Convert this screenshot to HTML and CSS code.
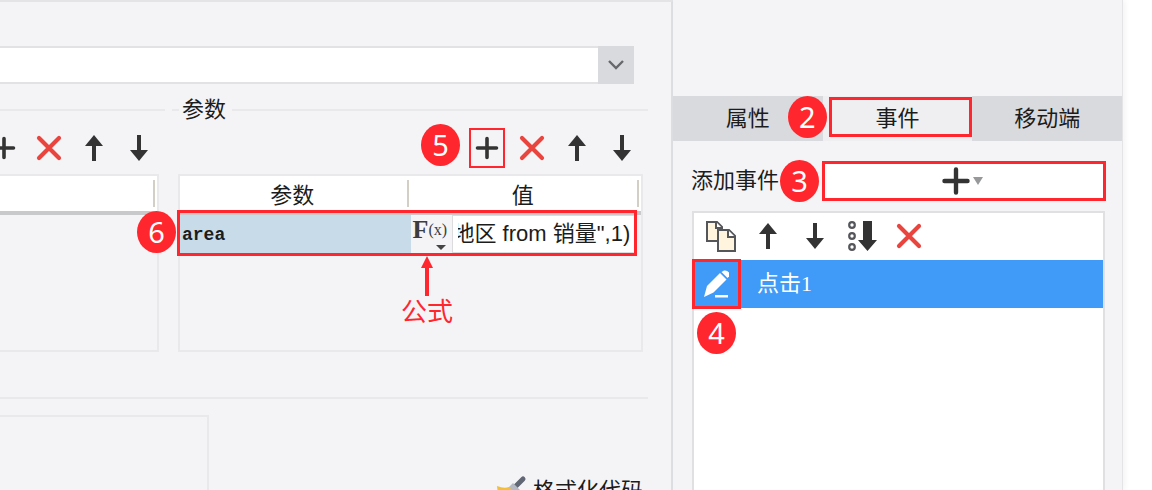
FILE: index.html
```html
<!DOCTYPE html>
<html lang="zh-CN">
<head>
<meta charset="utf-8">
<title>添加事件</title>
<link rel="stylesheet" href="styles.css">
</head>
<body>
<svg class="sprite" aria-hidden="true">
  <symbol id="plus" viewBox="0 0 28 28"><path d="M14 4.500v19M4.500 14h19" stroke="#333" stroke-width="3.600" stroke-linecap="round"/></symbol>
  <symbol id="cross" viewBox="0 0 28 28"><path d="M4 4l20 20M24 4l-20 20" stroke="#ea443e" stroke-width="4.200" stroke-linecap="round"/></symbol>
  <symbol id="up" viewBox="0 0 28 28"><path d="M14 1l9 11h-18z" fill="#333"/><path d="M14 9v18" stroke="#333" stroke-width="4"/></symbol>
  <symbol id="down" viewBox="0 0 28 28"><path d="M14 27l9-11h-18z" fill="#333"/><path d="M14 1v18" stroke="#333" stroke-width="4"/></symbol>
</svg>
<div class="page">
  <main class="editor">
    <div class="combo">
      <input class="combo-text" type="text" aria-label="名称">
      <button class="combo-open" type="button" aria-label="展开"><svg width="18" height="12" viewBox="0 0 18 12"><path d="M2 2l7 7 7-7" fill="none" stroke="#66686c" stroke-width="2.400"/></svg></button>
    </div>

    <div class="groups">
      <section class="group group-left">
        <div class="group-title"><span class="rule"></span></div>
        <div class="tools">
          <button class="tool" type="button" aria-label="添加"><svg class="icon"><use href="#plus"/></svg></button>
          <button class="tool" type="button" aria-label="删除"><svg class="icon"><use href="#cross"/></svg></button>
          <button class="tool" type="button" aria-label="上移"><svg class="icon"><use href="#up"/></svg></button>
          <button class="tool" type="button" aria-label="下移"><svg class="icon"><use href="#down"/></svg></button>
        </div>
        <div class="grid-box"><div class="blank-head"></div></div>
      </section>

      <section class="group group-right">
        <div class="group-title"><span class="rule rule-short"></span><h2 class="legend">参数</h2><span class="rule"></span></div>
        <div class="tools">
          <button class="tool tool-marked" type="button" aria-label="添加参数"><svg class="icon"><use href="#plus"/></svg><span class="badge badge-5">5</span></button>
          <button class="tool" type="button" aria-label="删除参数"><svg class="icon"><use href="#cross"/></svg></button>
          <button class="tool" type="button" aria-label="上移参数"><svg class="icon"><use href="#up"/></svg></button>
          <button class="tool" type="button" aria-label="下移参数"><svg class="icon"><use href="#down"/></svg></button>
        </div>
        <div class="grid-box">
          <table class="params">
            <thead><tr><th>参数</th><th>值</th></tr></thead>
            <tbody><tr>
              <td class="name">area</td>
              <td><div class="value">
                <button class="fx" type="button" aria-label="公式"><b>F</b><span>(x)</span><i class="fx-caret"></i></button>
                <input class="value-text" type="text" aria-label="值" value='地区 from 销量",1)'>
              </div></td>
            </tr></tbody>
          </table>
          <div class="row-mark"></div>
          <span class="badge badge-6">6</span>
          <div class="note">
            <svg width="12" height="40" viewBox="0 0 12 40"><path d="M6 0l6 12H0z" fill="#ff272d"/><path d="M6 10v30" stroke="#ff272d" stroke-width="4"/></svg>
            <span>公式</span>
          </div>
        </div>
      </section>
    </div>

    <hr class="divider">
    <div class="code-row">
      <div class="code-box"></div>
      <button class="format" type="button">
        <svg width="32" height="32" viewBox="0 0 32 32"><path d="M20 11l7-7" stroke="#626775" stroke-width="5" stroke-linecap="round"/><path d="M17 8l7 7-4 4-8-6z" fill="#b4b8c2"/><path d="M1 11q7 3 12 1l8 8q-3 8-11 10Q2 24 1 11z" fill="#f5bf35"/></svg>
        <span>格式化代码</span>
      </button>
    </div>
  </main>

  <aside class="panel">
    <nav class="tabs">
      <button class="tab" type="button">属性</button>
      <button class="tab tab-active" type="button">事件<span class="tab-mark"></span><span class="badge badge-2">2</span></button>
      <button class="tab" type="button">移动端</button>
    </nav>
    <div class="add-row">
      <label class="add-label" for="add">添加事件</label>
      <button class="add" id="add" type="button"><svg class="add-icon"><use href="#plus"/></svg><i class="add-caret"></i><span class="badge badge-3">3</span></button>
    </div>
    <div class="events">
      <div class="event-tools">
        <button class="tool" type="button" aria-label="复制"><svg width="32" height="32" viewBox="0 0 32 32" fill="#fff5df" stroke="#55565a" stroke-width="2"><path d="M2 2h10l5 5v14H2z"/><path d="M11 2v6h6" fill="#fff"/><path d="M13 10h11l6 6v15H13z"/><path d="M23 10v7h7" fill="#fff"/></svg></button>
        <button class="tool" type="button" aria-label="上移事件"><svg class="icon"><use href="#up"/></svg></button>
        <button class="tool" type="button" aria-label="下移事件"><svg class="icon"><use href="#down"/></svg></button>
        <button class="tool" type="button" aria-label="排序"><svg width="32" height="32" viewBox="0 0 32 32"><g fill="#fff" stroke="#55565a" stroke-width="2.200"><circle cx="6" cy="5" r="2.800"/><circle cx="6" cy="16" r="2.800"/><circle cx="6" cy="27" r="2.800"/></g><path d="M17 1h9v19h5L21.500 31 12 20h5z" fill="#333"/></svg></button>
        <button class="tool" type="button" aria-label="删除事件"><svg class="icon"><use href="#cross"/></svg></button>
      </div>
      <div class="event">
        <button class="edit" type="button" aria-label="编辑"><svg width="28" height="28" viewBox="0 0 28 28" fill="#fff"><path d="M1 27l3-11L17 3l6.500 6.500L10.500 22.500z"/><path d="M18.500 2L21 .500q3-.500 5 2v4L24.500 8z"/><path d="M12 25h13v2.500H12z"/></svg></button>
        <span class="event-name">点击1</span>
        <span class="badge badge-4">4</span>
      </div>
    </div>
  </aside>
</div>
</body>
</html>
```
FILE: styles.css
```css
* { box-sizing: border-box; }

body {
  margin: 0;
  background: #fff;
  color: #1c1c1c;
  font: 22px/24px "Liberation Sans", "Noto Sans CJK SC", sans-serif;
}

button, input { font: inherit; color: inherit; margin: 0; padding: 0; border: 0; }
button { background: none; }
.sprite { position: absolute; width: 0; height: 0; }

.page { display: flex; height: 100vh; padding-right: 29px; overflow: hidden; }

.editor {
  display: flex;
  flex: 1;
  flex-direction: column;
  min-width: 0;
  padding-top: 44px;
  background: #f4f4f7;
  border-top: 2px solid #e4e4e6;
  border-right: 2px solid #dedfe2;
}

.combo { display: flex; height: 38px; margin-right: 37px; flex: none; }
.combo-text {
  flex: 1;
  min-width: 0;
  background: #fff;
  border-top: 2px solid #e2e2e4;
  border-bottom: 2px solid #e2e2e4;
}
.combo-open { display: grid; place-items: center; width: 36px; background: #d9dade; }

.groups { display: flex; gap: 7px; margin: 14px 23px 0 0; flex: none; }
.group-left { flex: 1; min-width: 0; }
.group-right { width: 476px; }
.group-title { display: flex; align-items: center; height: 24px; }
.rule { flex: 1; height: 2px; background: #e9e9ec; }
.rule-short { flex: none; width: 7px; }
.legend { margin: 0 6px 0 3px; font-size: 22px; font-weight: 400; }

.tools {
  display: flex;
  justify-content: flex-end;
  align-items: center;
  gap: 9px;
  height: 52px;
  padding-right: 8px;
}
.tool {
  position: relative;
  display: grid;
  place-items: center;
  flex: none;
  width: 36px;
  height: 40px;
}
.tool-marked { border: 2px solid #ff272d; }
.icon { width: 28px; height: 28px; }

.grid-box { position: relative; height: 178px; margin: 0 5px 0 6px; border: 2px solid #e9e9ec; }
.group-left .grid-box { margin: 0 6px 0 0; border-left: 0; }
.blank-head {
  height: 39px;
  border-bottom: 4px solid #c8c9ca;
  background: linear-gradient(#d3cfc5, #d3cfc5) right 2px center / 2px 27px no-repeat #fff;
}

.params { width: 100%; table-layout: fixed; border-collapse: separate; border-spacing: 0; }
.params th {
  height: 39px;
  padding: 4px 6px 0 0;
  font-weight: 400;
  border-bottom: 4px solid #c8c9ca;
  background: linear-gradient(#d3cfc5, #d3cfc5) right 2px center / 2px 27px no-repeat #fff;
}
.params td { height: 38px; padding: 0; }
.params .name {
  padding: 2px 0 0 2px;
  background: #c8dbe8;
  font: bold 18px/24px "Liberation Mono", monospace;
}
.value { display: flex; height: 38px; padding-right: 4px; }
.fx {
  position: relative;
  display: flex;
  width: 41px;
  padding: 1px 0 0 2px;
  color: #3c3c3c;
  font: 16px/28px "Liberation Serif", serif;
}
.fx b { font-size: 26px; font-weight: 700; }
.fx-caret {
  position: absolute;
  right: 6px;
  bottom: 3px;
  border: 5px solid transparent;
  border-top-color: #444;
  border-bottom: 0;
}
.value-text {
  flex: 1;
  min-width: 0;
  padding-left: 5px;
  text-indent: -5px;
  background: #fff;
  border: 1px solid #dcdcdf;
}

.row-mark { position: absolute; left: -3px; right: 4px; top: 34px; height: 46px; border: 3px solid #ff272d; }
.note {
  position: absolute;
  left: 221px;
  top: 80px;
  display: flex;
  flex-direction: column;
  align-items: center;
  color: #ff272d;
  font-size: 26px;
  line-height: 32px;
}

.badge {
  position: absolute;
  width: 39px;
  height: 42px;
  border-radius: 50%;
  background: #ff272d;
  color: #fff;
  font: 29px/42px "Noto Sans", sans-serif;
  text-align: center;
}
.badge-2 { left: -35px; top: 0; }
.badge-3 { left: -45px; top: -4px; }
.badge-4 { left: 3px; top: 52px; }
.badge-5 { left: -50px; top: -6px; }
.badge-6 { left: -43px; top: 35px; }

.divider { flex: none; width: auto; height: 2px; margin: 45px 23px 0 0; border: 0; background: #e9e9ec; }
.code-row { display: flex; flex: 1; justify-content: space-between; min-height: 0; padding: 16px 28px 0 0; }
.code-box { width: 209px; border: solid #e9e9ec; border-width: 2px 2px 0 0; }
.format { display: flex; align-items: center; gap: 5px; align-self: flex-start; margin-top: 60px; }

.panel {
  display: flex;
  flex-direction: column;
  width: 450px;
  padding-top: 96px;
  background: #f4f4f7;
  border-right: 1px solid #e4e4e7;
  box-shadow: 2px 0 6px #0000000d;
}
.tabs { display: flex; height: 45px; flex: none; }
.tab { position: relative; flex: 1; background: #d9dade; }
.tab-active { background: #efeff1; }
.tab-mark { position: absolute; inset: 1px 0 4px 6px; border: 3px solid #ff272d; }

.add-row { display: flex; align-items: center; height: 40px; margin: 20px 16px 0 18px; flex: none; }
.add-label { flex: none; width: 131px; }
.add {
  position: relative;
  display: flex;
  flex: 1;
  align-items: center;
  justify-content: center;
  height: 40px;
  padding-right: 6px;
  background: #fff;
  border: 3px solid #ff272d;
}
.add-icon { width: 34px; height: 34px; }
.add-caret { border: 5px solid transparent; border-top: 8px solid #97989a; border-bottom: 0; }

.events {
  flex: 1;
  margin: 10px 17px 0 19px;
  background: #fff;
  border: 2px solid #e0e0e3;
  border-bottom: 0;
}
.event-tools { display: flex; align-items: center; gap: 11px; height: 47px; padding: 0 0 2px 9px; }
.event { position: relative; display: flex; align-items: center; gap: 16px; height: 48px; background: #409bf8; color: #fff; }
.edit { display: grid; place-items: center; width: 49px; height: 50px; margin-left: -2px; border: 3px solid #ff272d; }
.event-name { font-family: "Liberation Serif", "Noto Sans CJK SC", serif; font-weight: 400; }
```
